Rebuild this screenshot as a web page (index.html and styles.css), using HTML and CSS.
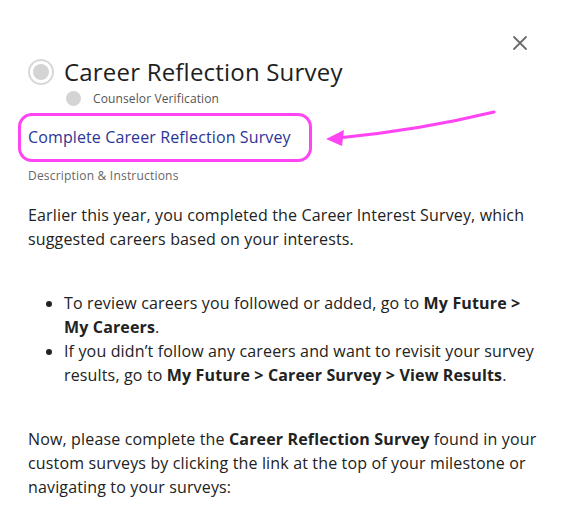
FILE: index.html
```html
<!DOCTYPE html>
<html>
<head>
<meta charset="utf-8">
<link rel="stylesheet" href="styles.css">
</head>
<body>
<div class="modal">
  <button class="close" aria-label="Close">
    <svg width="16" height="16" viewBox="0 0 16 16"><path d="M2 2 L14 14 M14 2 L2 14" stroke="#6b6b6b" stroke-width="1.8" stroke-linecap="round"/></svg>
  </button>
  <div class="title-row">
    <span class="radio"><span class="radio-dot"></span></span>
    <h1 class="title">Career Reflection Survey</h1>
  </div>
  <div class="sub-row">
    <span class="sub-dot"></span>
    <span class="sub-text">Counselor Verification</span>
  </div>
  <div class="link-wrap">
    <a class="survey-link" href="#">Complete Career Reflection Survey</a>
  </div>
  <div class="label">Description &amp; Instructions</div>
  <p class="para">Earlier this year, you completed the Career Interest Survey, which suggested careers based on your interests.</p>
  <ul class="list">
    <li>To review careers you followed or added, go to <b>My Future &gt; My Careers</b>.</li>
    <li>If you didn’t follow any careers and want to revisit your survey results, go to <b>My Future &gt; Career Survey &gt; View Results</b>.</li>
  </ul>
  <p class="para">Now, please complete the <b>Career Reflection Survey</b> found in your custom surveys by clicking the link at the top of your milestone or navigating to your surveys:</p>
  <svg class="arrow" width="566" height="200" viewBox="0 0 566 200">
    <path d="M494 112 Q420 130 338 138" stroke="#ff44f4" stroke-width="3" fill="none" stroke-linecap="round"/>
    <path d="M326 139 L344 130 L342 146 Z" fill="#ff44f4"/>
  </svg>
</div>
</body>
</html>
```
FILE: styles.css
```css
html, body {
  margin: 0;
  padding: 0;
  background: #fff;
}
body {
  font-family: "Open Sans", "Liberation Sans", sans-serif;
  color: #222;
}
.modal {
  position: relative;
  width: 566px;
  height: 506px;
  overflow: hidden;
  box-sizing: border-box;
  padding: 56px 24px 0 28px;
}
.close {
  position: absolute;
  top: 35px;
  left: 512px;
  width: 16px;
  height: 16px;
  padding: 0;
  border: 0;
  background: none;
}
.close svg { display: block; }
.title-row {
  display: flex;
  align-items: center;
  gap: 10px;
  height: 32px;
}
.radio {
  width: 26px;
  height: 26px;
  box-sizing: border-box;
  border: 2px solid #d8d8d8;
  border-radius: 50%;
  display: flex;
  align-items: center;
  justify-content: center;
  flex: none;
}
.radio-dot {
  width: 16px;
  height: 16px;
  border-radius: 50%;
  background: #d4d4d4;
}
.title {
  margin: 0;
  font-size: 24px;
  font-weight: 400;
  line-height: 32px;
  color: #1e1e1e;
  letter-spacing: 0.2px;
}
.sub-row {
  display: flex;
  align-items: center;
  gap: 12px;
  padding-left: 38px;
  height: 20px;
  margin-top: 0;
}
.sub-dot {
  width: 15px;
  height: 15px;
  border-radius: 50%;
  background: #d4d4d4;
  flex: none;
}
.sub-text {
  font-size: 12px;
  color: #555;
  letter-spacing: 0.12px;
}
.link-wrap {
  margin-top: 5px;
  margin-left: -10px;
}
.survey-link {
  display: inline-block;
  border: 3px solid #ff44f4;
  border-radius: 14px;
  padding: 10px 18px 11px 7px;
  font-size: 16px;
  line-height: 22px;
  color: #2b3596;
  text-decoration: none;
  letter-spacing: 0.12px;
}
.label {
  margin-top: 5px;
  font-size: 12px;
  line-height: 18px;
  color: #666;
  letter-spacing: 0.2px;
}
.para {
  margin: 18px 0 0;
  font-size: 16px;
  line-height: 24px;
  letter-spacing: 0.15px;
}
.list {
  margin: 40px 0 40px;
  padding-left: 36px;
  font-size: 16px;
  line-height: 24px;
  letter-spacing: 0.15px;
}
.list + .para { margin-top: 0; }
.arrow {
  position: absolute;
  left: 0;
  top: 0;
  pointer-events: none;
}
```
